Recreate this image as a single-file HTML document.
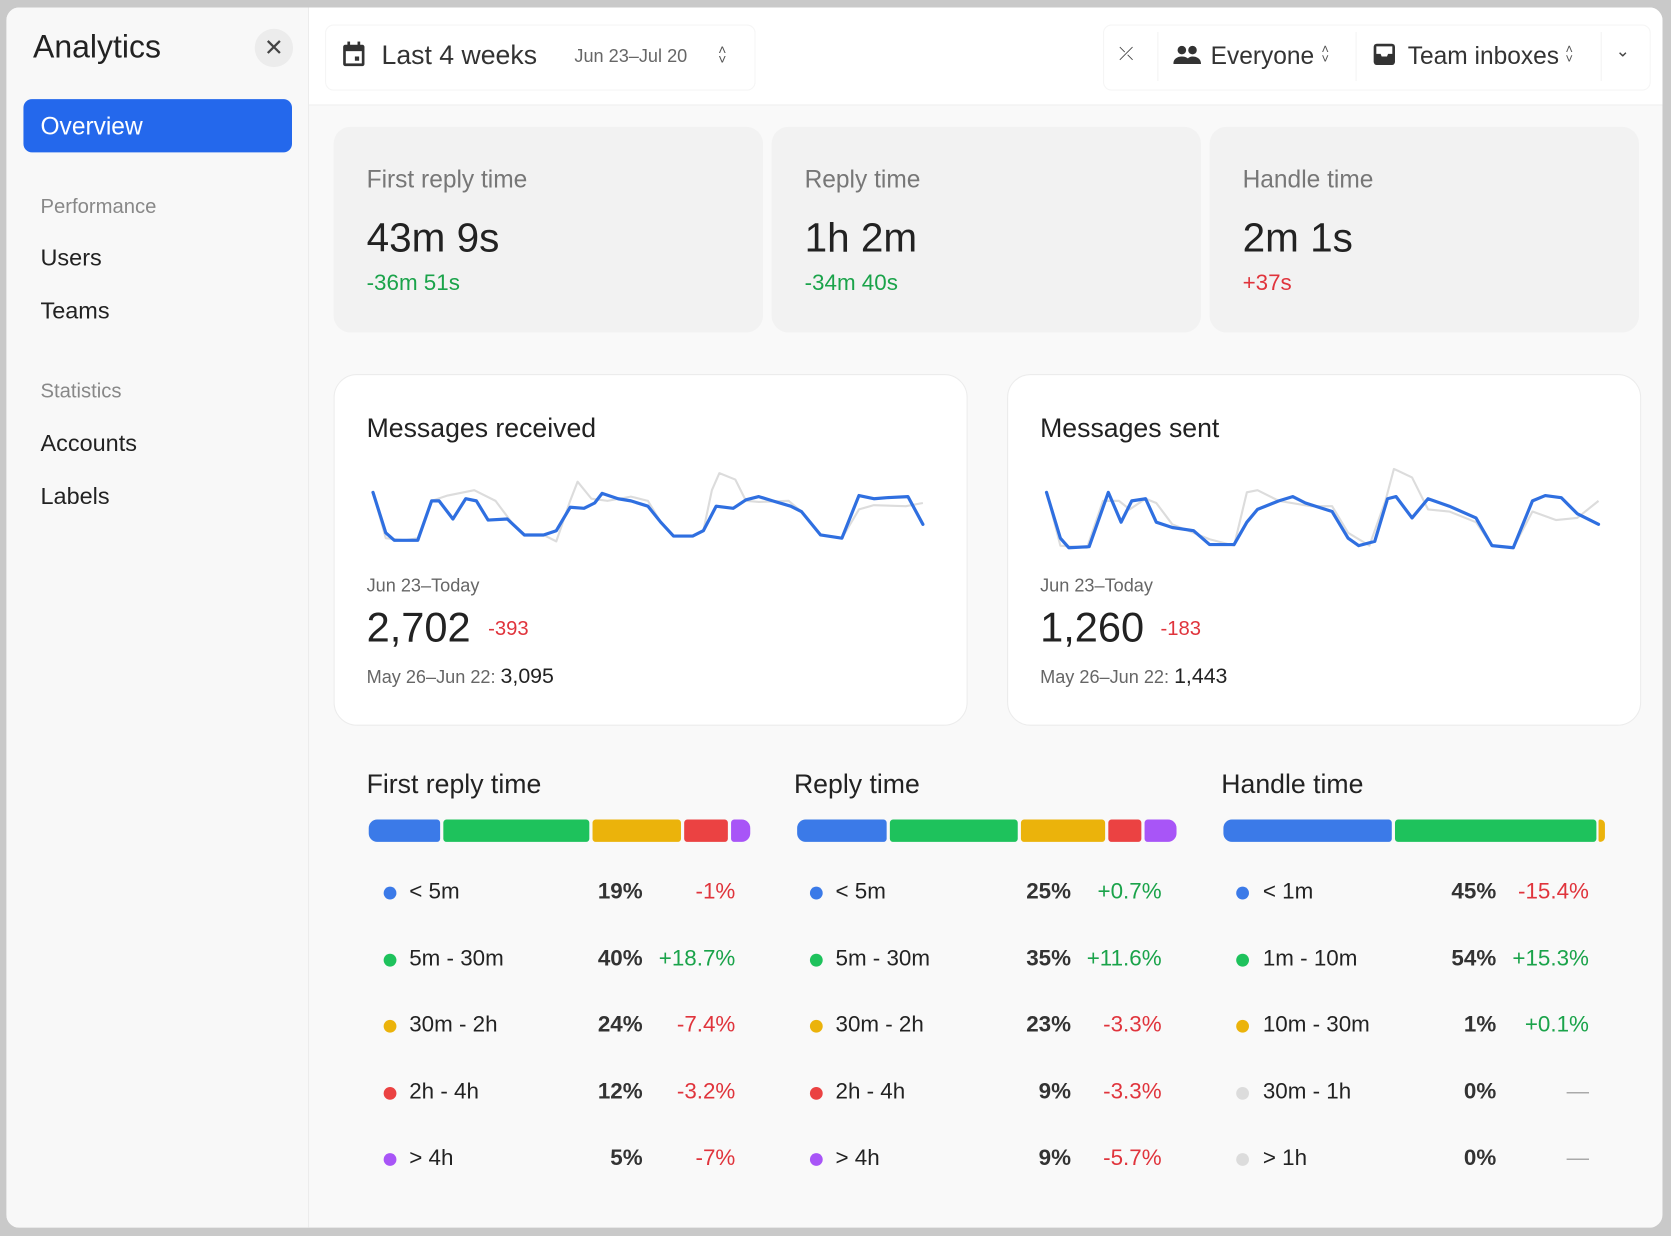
<!DOCTYPE html>
<html><head><meta charset="utf-8"><style>
html,body{margin:0;padding:0;width:1671px;height:1236px;overflow:hidden;background:#c9c9c9;}
#w{position:absolute;left:0;top:0;width:1568px;height:1160px;transform:scale(1.06569);transform-origin:0 0;font-family:"Liberation Sans",sans-serif;color:#222;}
.a{position:absolute;white-space:nowrap;}
.win{position:absolute;left:6px;top:7px;width:1554px;height:1145px;background:#f9f9f9;border-radius:12px;overflow:hidden;}
.side{position:absolute;left:0;top:0;width:283px;height:100%;background:#f8f8f8;border-right:1px solid #ececec;}
.hdr{position:absolute;left:284px;top:0;right:0;height:91px;background:#fff;border-bottom:1px solid #eee;}
.g{color:#1aa34a}.r{color:#e0343c}
.card{position:absolute;background:#f2f2f2;border-radius:16px;}
.wc{position:absolute;background:#fff;border:1px solid #ececec;border-radius:22px;}
.bar{position:absolute;top:769px;height:21px;border-radius:3px;}
.dot{position:absolute;width:12px;height:12px;border-radius:6px;}
.row{font-size:21px;}
.p{font-weight:bold;color:#333;}
</style></head><body><div id="w">
<div class="win">
 <div class="side"></div>
 <div class="hdr"></div>
</div>
<div class="a" style="left:31px;top:28px;font-size:30px;color:#222">Analytics</div>
<div class="a" style="left:239px;top:27px;width:36px;height:36px;border-radius:18px;background:#ececec;text-align:center;line-height:36px;font-size:22px;color:#444">✕</div>
<div class="a" style="left:22px;top:93px;width:252px;height:50px;background:#2468ec;border-radius:8px;"></div>
<div class="a" style="left:38px;top:105px;font-size:23px;color:#fff">Overview</div>
<div class="a" style="left:38px;top:184px;font-size:19px;color:#888">Performance</div>
<div class="a" style="left:38px;top:229px;font-size:22px">Users</div>
<div class="a" style="left:38px;top:279px;font-size:22px">Teams</div>
<div class="a" style="left:38px;top:357px;font-size:19px;color:#888">Statistics</div>
<div class="a" style="left:38px;top:403px;font-size:22px">Accounts</div>
<div class="a" style="left:38px;top:453px;font-size:22px">Labels</div>

<div class="a" style="left:305px;top:23px;width:402px;height:60px;border:1px solid #f5f5f5;border-radius:8px;"></div>
<svg class="a" style="left:320px;top:38px" width="24" height="26" viewBox="0 0 24 26"><rect x="2" y="4" width="20" height="20" rx="2" fill="#333"/><rect x="4.5" y="10" width="15" height="11.5" fill="#fff"/><rect x="6" y="1" width="2.5" height="6" fill="#333"/><rect x="15.5" y="1" width="2.5" height="6" fill="#333"/><rect x="13" y="15" width="4" height="4" fill="#333"/></svg>
<div class="a" style="left:358px;top:38px;font-size:25px;color:#333">Last 4 weeks</div>
<div class="a" style="left:539px;top:43px;font-size:17px;color:#666">Jun 23–Jul 20</div>
<div class="a" style="left:674px;top:42px;font-size:13px;color:#555;line-height:9px">˄<br>˅</div>

<div class="a" style="left:1035px;top:23px;width:512px;height:60px;border:1px solid #f5f5f5;border-radius:8px;"></div>
<div class="a" style="left:1050px;top:41px;font-size:17px;color:#444">⤫</div>
<div class="a" style="left:1086px;top:30px;width:1px;height:46px;background:#f3f3f3"></div>
<svg class="a" style="left:1101px;top:42px" width="26" height="20" viewBox="0 0 26 20"><circle cx="8" cy="5" r="4" fill="#333"/><circle cx="18" cy="5" r="4" fill="#333"/><path d="M0 18c0-5 4-7 8-7s8 2 8 7z M12 18c0-4 2-7 6-7s8 2 8 7z" fill="#333"/></svg>
<div class="a" style="left:1136px;top:39px;font-size:23px;color:#333">Everyone</div>
<div class="a" style="left:1240px;top:42px;font-size:12px;color:#555;line-height:9px">˄<br>˅</div>
<div class="a" style="left:1272px;top:30px;width:1px;height:46px;background:#f3f3f3"></div>
<svg class="a" style="left:1288px;top:40px" width="22" height="22" viewBox="0 0 22 22"><rect x="1" y="1" width="20" height="20" rx="3" fill="#333"/><path d="M3.5 3.5h15v7h-4l-1 2.5h-5l-1-2.5h-4z" fill="#fff"/></svg>
<div class="a" style="left:1321px;top:39px;font-size:23px;color:#333">Team inboxes</div>
<div class="a" style="left:1469px;top:42px;font-size:12px;color:#555;line-height:9px">˄<br>˅</div>
<div class="a" style="left:1502px;top:30px;width:1px;height:46px;background:#f3f3f3"></div>
<div class="a" style="left:1516px;top:38px;font-size:16px;color:#444">⌄</div>

<div class="card" style="left:313px;top:119px;width:403px;height:193px"></div>
<div class="card" style="left:724px;top:119px;width:403px;height:193px"></div>
<div class="card" style="left:1135px;top:119px;width:403px;height:193px"></div>
<div class="a" style="left:344px;top:155px;font-size:23px;color:#777">First reply time</div>
<div class="a" style="left:344px;top:203px;font-size:38px;color:#222">43m 9s</div>
<div class="a g" style="left:344px;top:254px;font-size:21px">-36m 51s</div>
<div class="a" style="left:755px;top:155px;font-size:23px;color:#777">Reply time</div>
<div class="a" style="left:755px;top:203px;font-size:38px;color:#222">1h 2m</div>
<div class="a g" style="left:755px;top:254px;font-size:21px">-34m 40s</div>
<div class="a" style="left:1166px;top:155px;font-size:23px;color:#777">Handle time</div>
<div class="a" style="left:1166px;top:203px;font-size:38px;color:#222">2m 1s</div>
<div class="a r" style="left:1166px;top:254px;font-size:21px">+37s</div>

<div class="wc" style="left:313px;top:351px;width:593px;height:328px"></div>
<div class="wc" style="left:945px;top:351px;width:593px;height:328px"></div>
<div class="a" style="left:344px;top:388px;font-size:25px">Messages received</div>
<div class="a" style="left:976px;top:388px;font-size:25px">Messages sent</div>
<svg class="a" style="left:0;top:0" width="1568" height="600">
<polyline fill="none" stroke="#dcdcdc" stroke-width="2" stroke-linejoin="round" points="350,462 362,505 380,507 392,505 405,470 420,465 445,460 465,470 480,490 492,502 510,502 522,508 535,470 542,452 555,468 570,470 592,466 608,470 620,490 632,503 650,503 660,498 668,460 675,444 690,450 700,470 712,471 740,470 752,480 770,502 790,505 806,478 820,474 850,475 866,472"/>
<polyline fill="none" stroke="#2f6fe0" stroke-width="3" stroke-linejoin="round" stroke-linecap="round" points="350,462 362,500 370,507 392,507 405,470 412,470 425,487 437,468 447,470 458,488 476,487 492,502 510,502 522,498 535,476 548,477 558,472 565,463 580,468 592,470 608,475 620,490 632,503 650,503 660,498 672,475 688,477 700,469 712,466 725,470 742,475 752,480 770,502 790,505 806,465 820,468 832,467 852,466 866,492"/>
<polyline fill="none" stroke="#dcdcdc" stroke-width="2" stroke-linejoin="round" points="982,462 995,512 1020,514 1035,470 1050,470 1060,478 1075,468 1085,472 1100,492 1120,500 1135,506 1158,512 1170,462 1180,460 1200,470 1230,475 1250,475 1265,500 1285,512 1300,470 1308,440 1325,448 1340,478 1360,480 1385,490 1400,512 1420,514 1438,480 1460,488 1480,486 1500,470"/>
<polyline fill="none" stroke="#2f6fe0" stroke-width="3" stroke-linejoin="round" stroke-linecap="round" points="982,462 995,505 1003,514 1022,513 1040,462 1052,490 1062,470 1075,468 1085,490 1100,495 1120,498 1135,511 1158,511 1170,490 1180,478 1200,470 1213,466 1225,472 1250,480 1265,505 1275,512 1290,508 1302,468 1310,466 1325,486 1340,468 1360,475 1385,486 1400,512 1420,514 1438,470 1450,465 1465,467 1480,482 1500,492"/>
</svg>
<div class="a" style="left:344px;top:540px;font-size:17px;color:#666">Jun 23–Today</div>
<div class="a" style="left:344px;top:568px;font-size:39px;color:#222">2,702</div>
<div class="a r" style="left:458px;top:580px;font-size:19px">-393</div>
<div class="a" style="left:344px;top:624px;font-size:17px;color:#666">May 26–Jun 22: <span style="font-size:20px;color:#222">3,095</span></div>
<div class="a" style="left:976px;top:540px;font-size:17px;color:#666">Jun 23–Today</div>
<div class="a" style="left:976px;top:568px;font-size:39px;color:#222">1,260</div>
<div class="a r" style="left:1089px;top:580px;font-size:19px">-183</div>
<div class="a" style="left:976px;top:624px;font-size:17px;color:#666">May 26–Jun 22: <span style="font-size:20px;color:#222">1,443</span></div>

<div class="a" style="left:344px;top:722px;font-size:25px">First reply time</div>
<div class="a" style="left:745px;top:722px;font-size:25px">Reply time</div>
<div class="a" style="left:1146px;top:722px;font-size:25px">Handle time</div>

<div class="bar" style="left:346px;width:67px;background:#3b7ae8;border-radius:8px 3px 3px 8px"></div>
<div class="bar" style="left:416px;width:137px;background:#1ec25c"></div>
<div class="bar" style="left:556px;width:83px;background:#ebb30b"></div>
<div class="bar" style="left:642px;width:41px;background:#eb4242"></div>
<div class="bar" style="left:686px;width:18px;background:#a855f7;border-radius:3px 8px 8px 3px"></div>
<div class="bar" style="left:748px;width:84px;background:#3b7ae8;border-radius:8px 3px 3px 8px"></div>
<div class="bar" style="left:835px;width:120px;background:#1ec25c"></div>
<div class="bar" style="left:958px;width:79px;background:#ebb30b"></div>
<div class="bar" style="left:1040px;width:31px;background:#eb4242"></div>
<div class="bar" style="left:1074px;width:30px;background:#a855f7;border-radius:3px 8px 8px 3px"></div>
<div class="bar" style="left:1148px;width:158px;background:#3b7ae8;border-radius:8px 3px 3px 8px"></div>
<div class="bar" style="left:1309px;width:189px;background:#1ec25c"></div>
<div class="bar" style="left:1500px;width:6px;background:#ebb30b;border-radius:3px 8px 8px 3px"></div>

<div class="dot" style="left:360px;top:832px;background:#3b7ae8"></div><div class="a row" style="left:384px;top:825px">&lt; 5m</div><div class="a row p" style="right:965px;top:825px">19%</div><div class="a row r" style="right:878px;top:825px">-1%</div>
<div class="dot" style="left:360px;top:895px;background:#1ec25c"></div><div class="a row" style="left:384px;top:888px">5m - 30m</div><div class="a row p" style="right:965px;top:888px">40%</div><div class="a row g" style="right:878px;top:888px">+18.7%</div>
<div class="dot" style="left:360px;top:957px;background:#ebb30b"></div><div class="a row" style="left:384px;top:950px">30m - 2h</div><div class="a row p" style="right:965px;top:950px">24%</div><div class="a row r" style="right:878px;top:950px">-7.4%</div>
<div class="dot" style="left:360px;top:1020px;background:#eb4242"></div><div class="a row" style="left:384px;top:1013px">2h - 4h</div><div class="a row p" style="right:965px;top:1013px">12%</div><div class="a row r" style="right:878px;top:1013px">-3.2%</div>
<div class="dot" style="left:360px;top:1082px;background:#a855f7"></div><div class="a row" style="left:384px;top:1075px">&gt; 4h</div><div class="a row p" style="right:965px;top:1075px">5%</div><div class="a row r" style="right:878px;top:1075px">-7%</div>

<div class="dot" style="left:760px;top:832px;background:#3b7ae8"></div><div class="a row" style="left:784px;top:825px">&lt; 5m</div><div class="a row p" style="right:563px;top:825px">25%</div><div class="a row g" style="right:478px;top:825px">+0.7%</div>
<div class="dot" style="left:760px;top:895px;background:#1ec25c"></div><div class="a row" style="left:784px;top:888px">5m - 30m</div><div class="a row p" style="right:563px;top:888px">35%</div><div class="a row g" style="right:478px;top:888px">+11.6%</div>
<div class="dot" style="left:760px;top:957px;background:#ebb30b"></div><div class="a row" style="left:784px;top:950px">30m - 2h</div><div class="a row p" style="right:563px;top:950px">23%</div><div class="a row r" style="right:478px;top:950px">-3.3%</div>
<div class="dot" style="left:760px;top:1020px;background:#eb4242"></div><div class="a row" style="left:784px;top:1013px">2h - 4h</div><div class="a row p" style="right:563px;top:1013px">9%</div><div class="a row r" style="right:478px;top:1013px">-3.3%</div>
<div class="dot" style="left:760px;top:1082px;background:#a855f7"></div><div class="a row" style="left:784px;top:1075px">&gt; 4h</div><div class="a row p" style="right:563px;top:1075px">9%</div><div class="a row r" style="right:478px;top:1075px">-5.7%</div>

<div class="dot" style="left:1160px;top:832px;background:#3b7ae8"></div><div class="a row" style="left:1185px;top:825px">&lt; 1m</div><div class="a row p" style="right:164px;top:825px">45%</div><div class="a row r" style="right:77px;top:825px">-15.4%</div>
<div class="dot" style="left:1160px;top:895px;background:#1ec25c"></div><div class="a row" style="left:1185px;top:888px">1m - 10m</div><div class="a row p" style="right:164px;top:888px">54%</div><div class="a row g" style="right:77px;top:888px">+15.3%</div>
<div class="dot" style="left:1160px;top:957px;background:#ebb30b"></div><div class="a row" style="left:1185px;top:950px">10m - 30m</div><div class="a row p" style="right:164px;top:950px">1%</div><div class="a row g" style="right:77px;top:950px">+0.1%</div>
<div class="dot" style="left:1160px;top:1020px;background:#dcdcdc"></div><div class="a row" style="left:1185px;top:1013px">30m - 1h</div><div class="a row p" style="right:164px;top:1013px">0%</div><div class="a row" style="right:77px;top:1013px;color:#aaa">—</div>
<div class="dot" style="left:1160px;top:1082px;background:#dcdcdc"></div><div class="a row" style="left:1185px;top:1075px">&gt; 1h</div><div class="a row p" style="right:164px;top:1075px">0%</div><div class="a row" style="right:77px;top:1075px;color:#aaa">—</div>
</div></body></html>
